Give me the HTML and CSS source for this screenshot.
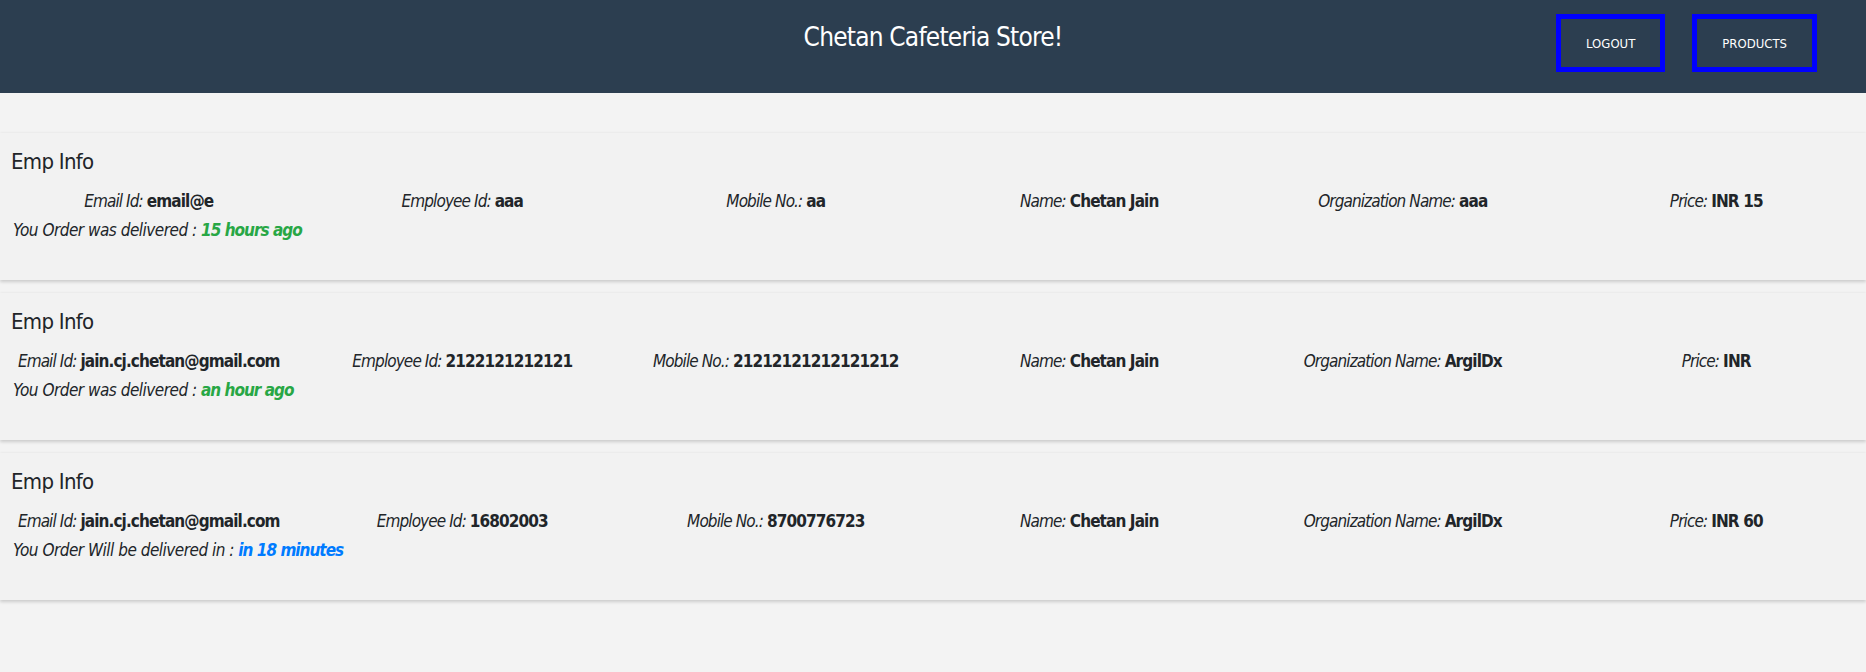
FILE: index.html
```html
<!DOCTYPE html>
<html lang="en">
<head>
<meta charset="utf-8">
<title>Chetan Cafeteria Store!</title>
<link rel="stylesheet" href="styles.css">
</head>
<body>
<header class="topbar">
  <div class="topbar-side"></div>
  <h1 class="brand">Chetan Cafeteria Store!</h1>
  <nav class="actions">
    <button class="nav-btn">LOGOUT</button>
    <button class="nav-btn">PRODUCTS</button>
  </nav>
</header>

<main class="orders">
  <section class="card">
    <h2 class="card-title">Emp Info</h2>
    <div class="fields">
      <div class="field"><span class="label">Email Id:</span> <span class="value">email@e</span></div>
      <div class="field"><span class="label">Employee Id:</span> <span class="value">aaa</span></div>
      <div class="field"><span class="label">Mobile No.:</span> <span class="value">aa</span></div>
      <div class="field"><span class="label">Name:</span> <span class="value">Chetan Jain</span></div>
      <div class="field"><span class="label">Organization Name:</span> <span class="value">aaa</span></div>
      <div class="field"><span class="label">Price:</span> <span class="value">INR 15</span></div>
    </div>
    <p class="status">You Order was delivered : <span class="when done">15 hours ago</span></p>
  </section>

  <section class="card">
    <h2 class="card-title">Emp Info</h2>
    <div class="fields">
      <div class="field"><span class="label">Email Id:</span> <span class="value">jain.cj.chetan@gmail.com</span></div>
      <div class="field"><span class="label">Employee Id:</span> <span class="value">2122121212121</span></div>
      <div class="field"><span class="label">Mobile No.:</span> <span class="value">21212121212121212</span></div>
      <div class="field"><span class="label">Name:</span> <span class="value">Chetan Jain</span></div>
      <div class="field"><span class="label">Organization Name:</span> <span class="value">ArgilDx</span></div>
      <div class="field"><span class="label">Price:</span> <span class="value">INR</span></div>
    </div>
    <p class="status">You Order was delivered : <span class="when done">an hour ago</span></p>
  </section>

  <section class="card">
    <h2 class="card-title">Emp Info</h2>
    <div class="fields">
      <div class="field"><span class="label">Email Id:</span> <span class="value">jain.cj.chetan@gmail.com</span></div>
      <div class="field"><span class="label">Employee Id:</span> <span class="value">16802003</span></div>
      <div class="field"><span class="label">Mobile No.:</span> <span class="value">8700776723</span></div>
      <div class="field"><span class="label">Name:</span> <span class="value">Chetan Jain</span></div>
      <div class="field"><span class="label">Organization Name:</span> <span class="value">ArgilDx</span></div>
      <div class="field"><span class="label">Price:</span> <span class="value">INR 60</span></div>
    </div>
    <p class="status">You Order Will be delivered in : <span class="when pending">in 18 minutes</span></p>
  </section>
</main>
</body>
</html>
```

FILE: styles.css
```css
* {
  box-sizing: border-box;
}

html, body {
  margin: 0;
  padding: 0;
}

body {
  background: #f3f3f3;
  color: #212529;
  font-family: "DejaVu Sans Condensed", "DejaVu Sans", "Liberation Sans", sans-serif;
  font-stretch: condensed;
  min-height: 672px;
}

.topbar {
  display: grid;
  grid-template-columns: 1fr auto 1fr;
  align-items: start;
  height: 93px;
  background: #2c3e50;
}

.brand {
  margin: 0;
  padding-top: 19px;
  font-size: 26px;
  line-height: 36px;
  letter-spacing: -0.8px;
  font-weight: 400;
  color: #ffffff;
  white-space: nowrap;
}

.actions {
  display: flex;
  justify-content: flex-end;
  gap: 27px;
  padding: 14px 49px 0 0;
}

.nav-btn {
  height: 58px;
  padding: 0 25px;
  border: 5px solid #0000ff;
  background: transparent;
  color: #ffffff;
  font-family: inherit;
  font-stretch: condensed;
  font-size: 13px;
  line-height: 1;
  cursor: pointer;
}

.orders {
  display: flex;
  flex-direction: column;
  gap: 13px;
  padding-top: 40px;
}

.card {
  height: 147px;
  padding: 13px 11px 0;
  background: #f2f2f2;
  box-shadow: 0 2px 3px rgba(0, 0, 0, 0.16), 0 -1px 2px rgba(0, 0, 0, 0.03);
}

.card-title {
  margin: 0;
  font-size: 22px;
  line-height: 32px;
  letter-spacing: -0.7px;
  font-weight: 400;
}

.fields {
  display: grid;
  grid-template-columns: repeat(6, 1fr);
  margin: 9px -18px 0 -19px;
  font-size: 17px;
  line-height: 29px;
  letter-spacing: -0.9px;
}

.field {
  text-align: center;
  white-space: nowrap;
}

.label {
  font-style: italic;
  font-weight: 400;
}

.value {
  font-weight: 700;
}

.status {
  margin: 0;
  padding-left: 2px;
  font-size: 17px;
  line-height: 29px;
  letter-spacing: -0.5px;
  font-style: italic;
}

.when {
  font-weight: 700;
  letter-spacing: -1px;
}

.done {
  color: #28a745;
}

.pending {
  color: #007bff;
}
```
